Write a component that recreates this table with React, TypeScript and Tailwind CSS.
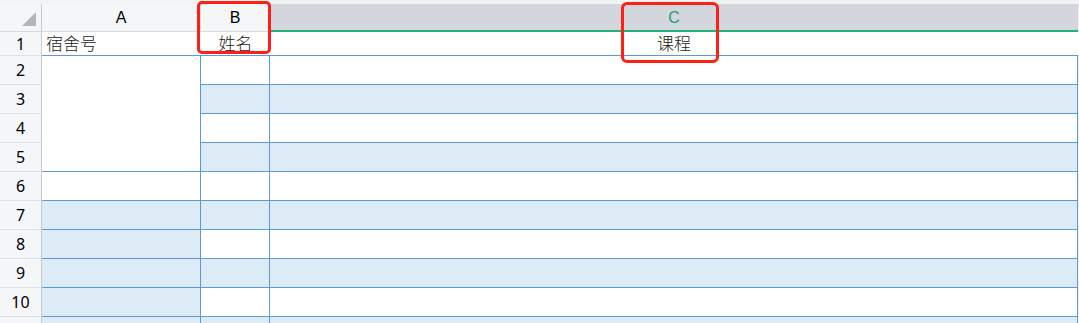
import React from 'react';

// 表格截图：宿舍号 / 姓名 / 课程，C 列被选中
const GRID = 'border-[#5b9bd5]';
const FILL = 'bg-[#ddebf7]';
const HEAD_LINE = 'border-[#d6d9de]';

const ROWS = [2, 3, 4, 5, 6, 7, 8, 9, 10, 11];

// A 列：2-5 合并为白色，6 白色，7 起浅蓝
const aFilled = (r: number) => r >= 7;
// B、C 列：奇数行浅蓝
const bcFilled = (r: number) => r % 2 === 1;

function RowHead({ n, first }: { n: number; first?: boolean }) {
  return (
    <div
      className={`flex items-center justify-center border-r border-b border-r-[#c6cad0] border-b-[#dcdfe3] bg-[#f5f6f8] text-[16px] text-black ${
        first ? 'pt-[1px]' : ''
      }`}
    >
      {/* 第 11 行只露出顶部，行号不可见 */}
      {n <= 10 ? n : null}
    </div>
  );
}

export default function App() {
  return (
    <div className="relative h-[323px] w-[1079px] overflow-hidden bg-white font-['Noto_Sans','Noto_Sans_CJK_SC',sans-serif]">
      {/* 顶部细条 */}
      <div className="h-[4px] bg-[#f2f3f5]" />

      {/* 列标题 */}
      <div className="flex h-[28px] font-['Liberation_Sans',sans-serif] text-[16px]">
        <div className={`relative w-[42px] shrink-0 border-r border-b ${HEAD_LINE} border-r-[#c6cad0] bg-[#f5f6f8]`}>
          <svg className="absolute top-[8px] left-[22px]" width="14" height="14" viewBox="0 0 14 14">
            <polygon points="14,0 14,14 0,14" fill="#b6b6b6" />
          </svg>
        </div>
        <div className={`flex w-[159px] shrink-0 items-center justify-center border-r border-b ${HEAD_LINE} bg-[#f5f6f8] text-black`}>
          A
        </div>
        <div className={`flex w-[69px] shrink-0 items-center justify-center border-r border-b ${HEAD_LINE} bg-[#f5f6f8] text-black`}>
          B
        </div>
        <div className="flex w-[808px] shrink-0 items-center justify-center border-b-2 border-[#21b07a] bg-[#d3d6dc] pt-[1px] text-[#21a366]">
          C
        </div>
        <div className="flex-1 bg-[#eef0f3]" />
      </div>

      {/* 表格主体 */}
      <div className="grid grid-cols-[42px_159px_69px_808px_1px] grid-rows-[24px_repeat(10,29px)]">
        {/* 第 1 行 */}
        <RowHead n={1} first />
        <div className={`flex items-end border-b ${GRID} pb-[1px] pl-[4px] font-['Noto_Sans_CJK_SC',sans-serif] text-[17px] leading-[22px] font-light text-[#222]`}>
          宿舍号
        </div>
        <div className={`flex items-end justify-center border-b ${GRID} pb-[1px] font-['Noto_Sans_CJK_SC',sans-serif] text-[17px] leading-[22px] font-light text-[#222]`}>
          姓名
        </div>
        <div className={`flex items-end justify-center border-b ${GRID} pb-[1px] font-['Noto_Sans_CJK_SC',sans-serif] text-[17px] leading-[22px] font-light text-[#222]`}>
          课程
        </div>
        <div />

        {ROWS.map((r) => (
          <React.Fragment key={r}>
            <RowHead n={r} />
            {r === 2 && <div className={`row-span-4 border-r border-b ${GRID} bg-white`} />}
            {r >= 6 && <div className={`border-r border-b ${GRID} ${aFilled(r) ? FILL : 'bg-white'}`} />}
            <div className={`border-r border-b ${GRID} ${bcFilled(r) ? FILL : 'bg-white'}`} />
            <div className={`border-r border-b ${GRID} ${bcFilled(r) ? FILL : 'bg-white'}`} />
            <div className="bg-[#f3f4f6]" />
          </React.Fragment>
        ))}
      </div>

      {/* 红色标注框 */}
      <div className="absolute top-[1px] left-[197px] h-[53px] w-[74px] rounded-[5px] border-[3px] border-[#fe2015]" />
      <div className="absolute top-[2px] left-[621px] h-[61px] w-[98px] rounded-[6px] border-[3px] border-[#fe2015]" />
    </div>
  );
}
